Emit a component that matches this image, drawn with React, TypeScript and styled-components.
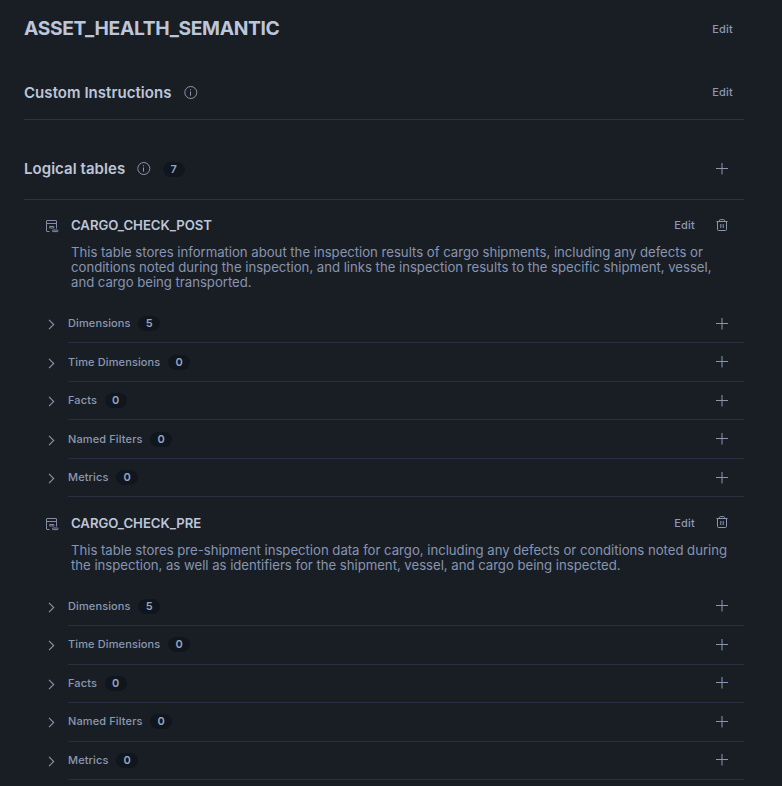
import React from "react";
import styled, { createGlobalStyle } from "styled-components";

const GlobalStyle = createGlobalStyle`
  * { box-sizing: border-box; }
  html, body { margin: 0; background: #191e24; }
  body { font-family: Inter, "Liberation Sans", sans-serif; color: #8a96ad; overflow: hidden; }
`;

const Page = styled.main`
  width: 782px;
  height: 786px;
  padding: 0 38px 0 24px;
  overflow: hidden;
  background: #191e24;
`;

const SectionBar = styled.header<{ $height: number; $top: number; $right?: number; $line?: boolean }>`
  display: flex;
  align-items: flex-start;
  justify-content: space-between;
  height: ${(p) => p.$height}px;
  padding: ${(p) => p.$top}px ${(p) => p.$right ?? 11}px 0 0;
  border-bottom: ${(p) => (p.$line ? "1px solid #2b3241" : "none")};
`;

const Group = styled.div<{ $gap?: number; $tall?: boolean }>`
  display: flex;
  align-items: center;
  height: ${(p) => (p.$tall ? 22 : 20)}px;
  gap: ${(p) => p.$gap ?? 0}px;
`;

const Title = styled.h1`
  margin: 0;
  font-size: 19.25px;
  line-height: 18px;
  font-weight: 700;
  letter-spacing: -0.34px;
  color: #bdc5d9;
`;

const SectionTitle = styled.h2`
  margin: 0 12px 0 0;
  font-size: 15px;
  line-height: 20px;
  font-weight: 600;
  letter-spacing: 0.05px;
  color: #bdc5d9;
`;

const TextButton = styled.button`
  padding: 0;
  border: 0;
  background: none;
  font: 500 11px/20px Inter, sans-serif;
  letter-spacing: 0.2px;
  color: #8c98b2;
`;

const IconButton = styled.button`
  display: flex;
  padding: 0;
  border: 0;
  background: none;
  color: #8a96ad;
`;

const Badge = styled.span`
  display: inline-flex;
  align-items: center;
  justify-content: center;
  width: 22px;
  height: 15px;
  border-radius: 8px;
  background: #10161d;
  font-size: 11px;
  line-height: 15px;
  font-weight: 600;
  color: #98a4bd;
`;

const TableBlock = styled.section`
  padding: 15px 0 0 21px;

  & + & {
    padding-top: 15.5px;
  }
`;

const TableHead = styled.div`
  display: flex;
  align-items: center;
  justify-content: space-between;
  height: 20px;
  padding-right: 16px;
`;

const TableName = styled.h3`
  margin: 0 0 0 12px;
  font-size: 13.2px;
  line-height: 20px;
  font-weight: 600;
  letter-spacing: -0.05px;
  color: #bdc5d9;
`;

const Description = styled.p`
  margin: 10px 0 14.3px 26px;
  font-size: 13.2px;
  line-height: 15.2px;
  letter-spacing: -0.03px;
  white-space: pre-line;
  color: #8794b2;
`;

const Row = styled.div`
  display: flex;
  height: 38.5px;
`;

const Chevron = styled.div`
  width: 23px;
  padding: 14.3px 0 0 3px;
  color: #8a96ad;
`;

const RowBody = styled.div`
  flex: 1;
  display: flex;
  align-items: center;
  justify-content: space-between;
  padding-right: 16px;
  border-bottom: 1px solid #272f40;
`;

const RowLabel = styled.span`
  margin-right: 7.7px;
  font-size: 11px;
  line-height: 17px;
  margin-top: -0.2px;
  font-weight: 500;
  letter-spacing: 0.12px;
  color: #8c98b2;
`;

const Svg = styled.svg`
  display: block;
  fill: none;
  stroke: currentColor;
  stroke-width: 1;
`;

const InfoIcon = () => (
  <Svg width="14" height="14" viewBox="0 0 14 14">
    <circle cx="6.8" cy="6.5" r="6" />
    <path d="M6.5 5.5v4.2M6.5 3.2v1.1" />
  </Svg>
);

const PlusIcon = () => (
  <Svg width="12" height="12" viewBox="0 0 12 12">
    <path d="M0 5.5h12M6 0v11.5" />
  </Svg>
);

const ChevronIcon = () => (
  <Svg width="7" height="11" viewBox="0 0 7 11">
    <path d="M1 .8l4.7 4.7L1 10.2" strokeWidth="1.1" />
  </Svg>
);

const TrashIcon = () => (
  <Svg width="12" height="13" viewBox="0 0 12 13">
    <path d="M.5 2.5h11M3.5 2.5v-1q0-.9.9-.9h3.2q.9 0 .9.9v1M1.5 2.5v8q0 1 1 1h7q1 0 1-1v-8M4.8 5v4M7.2 5v4" />
  </Svg>
);

const TableIcon = () => (
  <Svg width="14" height="13" viewBox="0 0 14 13">
    <path d="M4.5 11.5H2q-.5 0-.5-.5V1q0-.5.5-.5h9q.5 0 .5.5v7.5M1.5 3.5h10" />
    <rect x="4.5" y="6.5" width="4.5" height="1.5" rx=".3" />
    <rect x="7.5" y="10" width="5.5" height="1.6" rx=".6" />
  </Svg>
);

const TableMark = styled.span`
  padding-top: 3px;
  color: #818da4;
`;

const categories = ["Dimensions", "Time Dimensions", "Facts", "Named Filters", "Metrics"];

const tables = [
  {
    name: "CARGO_CHECK_POST",
    text: "This table stores information about the inspection results of cargo shipments, including any defects or\nconditions noted during the inspection, and links the inspection results to the specific shipment, vessel,\nand cargo being transported.",
    counts: [5, 0, 0, 0, 0],
  },
  {
    name: "CARGO_CHECK_PRE",
    text: "This table stores pre-shipment inspection data for cargo, including any defects or conditions noted during\nthe inspection, as well as identifiers for the shipment, vessel, and cargo being inspected.",
    counts: [5, 0, 0, 0, 0],
  },
];

export default function App() {
  return (
    <Page>
      <GlobalStyle />
      <SectionBar $height={64} $top={19}>
        <Title>ASSET_HEALTH_SEMANTIC</Title>
        <TextButton>Edit</TextButton>
      </SectionBar>
      <SectionBar $height={56} $top={18} $line>
        <Group $tall>
          <SectionTitle>Custom Instructions</SectionTitle>
          <InfoIcon />
        </Group>
        <TextButton>Edit</TextButton>
      </SectionBar>
      <SectionBar $height={80} $top={39} $right={16.5} $line>
        <Group $gap={11.5}>
          <Group>
            <SectionTitle>Logical tables</SectionTitle>
            <InfoIcon />
          </Group>
          <Badge>7</Badge>
        </Group>
        <Group>
          <IconButton aria-label="Add table"><PlusIcon /></IconButton>
        </Group>
      </SectionBar>
      {tables.map((table) => (
        <TableBlock key={table.name}>
          <TableHead>
            <Group>
              <TableMark><TableIcon /></TableMark>
              <TableName>{table.name}</TableName>
            </Group>
            <Group $gap={21}>
              <TextButton>Edit</TextButton>
              <IconButton aria-label="Delete"><TrashIcon /></IconButton>
            </Group>
          </TableHead>
          <Description>{table.text}</Description>
          {categories.map((label, i) => (
            <Row key={label}>
              <Chevron><ChevronIcon /></Chevron>
              <RowBody>
                <Group>
                  <RowLabel>{label}</RowLabel>
                  <Badge>{table.counts[i]}</Badge>
                </Group>
                <IconButton aria-label="Add"><PlusIcon /></IconButton>
              </RowBody>
            </Row>
          ))}
        </TableBlock>
      ))}
    </Page>
  );
}
